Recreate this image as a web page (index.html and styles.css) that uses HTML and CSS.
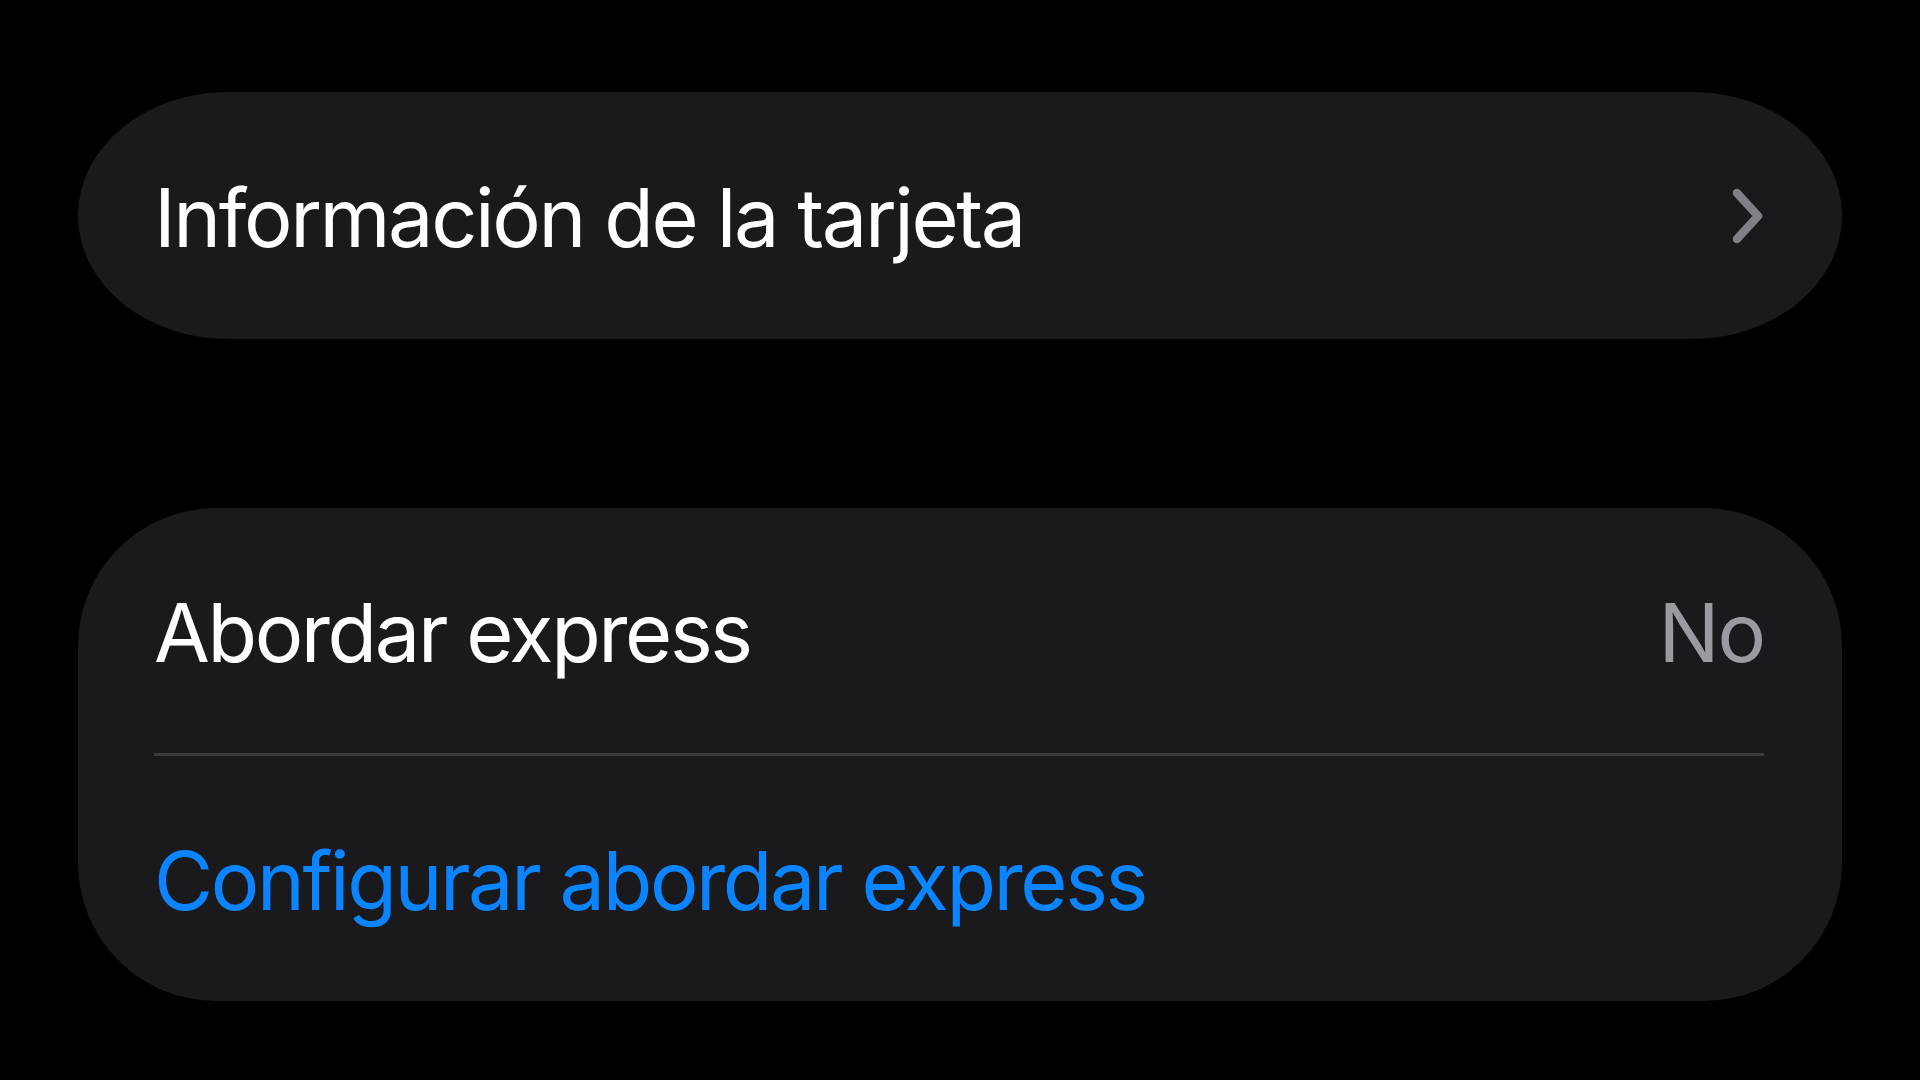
FILE: index.html
```html
<!DOCTYPE html>
<html lang="es">
<head>
<meta charset="utf-8">
<title>Abordar express</title>
<link rel="stylesheet" href="styles.css">
</head>
<body>
<main class="page">
  <section class="card card-single">
    <div class="row row-tall">
      <span class="label">Información de la tarjeta</span>
      <svg class="chevron" width="34" height="56" viewBox="0 0 34 56" aria-hidden="true">
        <polyline points="6,5 27,28 6,51" fill="none" stroke="#808086" stroke-width="8.5" stroke-linecap="round" stroke-linejoin="round"/>
      </svg>
    </div>
  </section>

  <section class="card card-group">
    <div class="row">
      <span class="label">Abordar express</span>
      <span class="value">No</span>
    </div>
    <div class="separator"></div>
    <div class="row">
      <span class="label link">Configurar abordar express</span>
    </div>
  </section>
</main>
</body>
</html>
```

FILE: styles.css
```css
html, body {
  margin: 0;
  padding: 0;
  background: #000;
}

body {
  width: 1920px;
  height: 1080px;
  overflow: hidden;
  font-family: Inter, "Liberation Sans", sans-serif;
  color: #fff;
}

.page {
  display: flex;
  flex-direction: column;
  gap: 169px;
  padding: 92px 78px 0 78px;
}

.card {
  background: #1a1a1c;
  padding: 0 78px 0 76px;
}

.card-single {
  border-radius: 150px / 123px;
}

.card-group {
  border-radius: 138px;
}

.row {
  height: 245px;
  display: flex;
  align-items: center;
  justify-content: space-between;
}

.row-tall {
  height: 247px;
}

.label {
  font-size: 81px;
  font-weight: 400;
  letter-spacing: -2.4px;
  line-height: 1;
  padding-top: 6px;
  white-space: nowrap;
}

.value {
  font-size: 81px;
  line-height: 1;
  padding-top: 6px;
  color: #9a9aa0;
  letter-spacing: -2px;
}

.link {
  color: #0a84ff;
}

.chevron {
  display: block;
  margin-right: -1px;
}

.separator {
  height: 3px;
  background: #3a3a3d;
}
```
